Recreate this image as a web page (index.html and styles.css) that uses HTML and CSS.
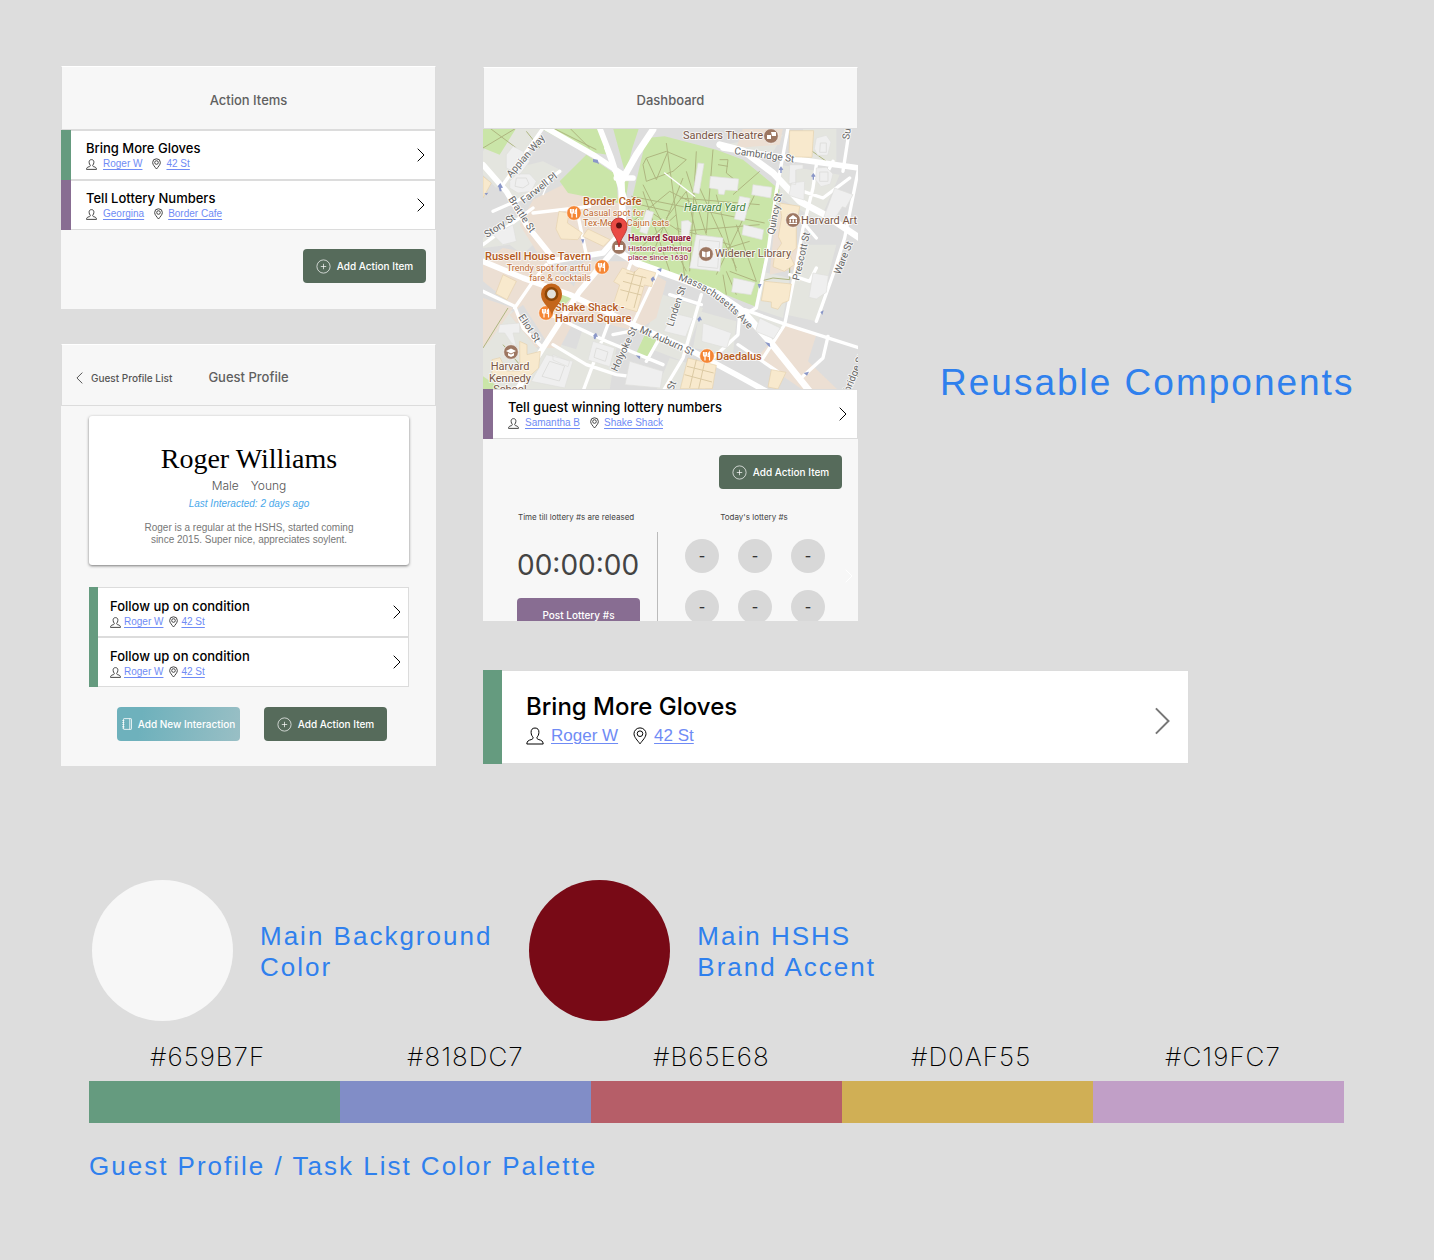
FILE: index.html
```html
<!DOCTYPE html>
<html lang="en">
<head>
<meta charset="utf-8">
<title>Reusable Components</title>
<meta name="viewport" content="width=device-width, initial-scale=1">
<link rel="stylesheet" href="styles.css">
</head>
<body>
<svg class="sprite" aria-hidden="true">
  <symbol id="i-person" viewBox="0 0 18 18"><path d="M9 1C6.300 1 4.900 2.900 5.100 5.400c.1 2.300.8 3.700 1.900 4.700.3 1.500-.4 2.100-1.800 2.500-2.500.7-4.200 1.300-4.400 4.400h16.400c-.2-3.100-1.900-3.700-4.400-4.400-1.400-.4-2.100-1-1.800-2.500 1.100-1 1.800-2.400 1.900-4.700C13.100 2.900 11.700 1 9 1z" fill="none" stroke="currentColor" vector-effect="non-scaling-stroke"/></symbol>
  <symbol id="i-pin" viewBox="0 0 14 18"><path d="M7 16.800C4.500 13.400 1 10.200 1 6.700a6 5.800 0 0 1 12 0c0 3.500-3.500 6.700-6 10.100z" fill="none" stroke="currentColor" vector-effect="non-scaling-stroke"/><circle cx="7" cy="6.700" r="2.800" fill="none" stroke="currentColor" vector-effect="non-scaling-stroke"/></symbol>
  <symbol id="i-next" viewBox="0 0 8 14"><path d="M.7.7 7 7 .7 13.300" fill="none" stroke="currentColor" vector-effect="non-scaling-stroke"/></symbol>
  <symbol id="i-back" viewBox="0 0 8 14"><path d="M7.300.7 1 7l6.300 6.300" fill="none" stroke="currentColor" vector-effect="non-scaling-stroke"/></symbol>
  <symbol id="i-plus" viewBox="0 0 15 15"><g fill="none" stroke="currentColor" stroke-width=".7"><circle cx="7.500" cy="7.500" r="6.600"/><path d="M4.800 7.500h5.400M7.500 4.800v5.400"/></g></symbol>
  <symbol id="i-book" viewBox="0 0 10 12"><g fill="none" stroke="currentColor" stroke-width=".8"><rect x="1.500" y=".6" width="8" height="10.800" rx=".6"/><path d="M7.800.6v10.800M.3 2.500h2M.3 4.500h2M.3 6.500h2M.3 8.500h2M.3 10h2"/></g></symbol>
</svg>

<main>
  <section class="board">
    <div class="column">
      <article class="screen screen--actions">
        <header class="bar"><h2>Action Items</h2></header>
        <ul class="tasks">
          <li class="task task--green">
            <div class="task__body">
              <h3>Bring More Gloves</h3>
              <p class="meta"><svg class="ico"><use href="#i-person"/></svg><a href="#">Roger W</a><svg class="ico ico--pin"><use href="#i-pin"/></svg><a href="#">42 St</a></p>
            </div>
            <svg class="next"><use href="#i-next"/></svg>
          </li>
          <li class="task task--purple">
            <div class="task__body">
              <h3>Tell Lottery Numbers</h3>
              <p class="meta"><svg class="ico"><use href="#i-person"/></svg><a href="#">Georgina</a><svg class="ico ico--pin"><use href="#i-pin"/></svg><a href="#">Border Cafe</a></p>
            </div>
            <svg class="next"><use href="#i-next"/></svg>
          </li>
        </ul>
        <div class="actions"><button class="btn" type="button"><svg class="btn__plus"><use href="#i-plus"/></svg>Add Action Item</button></div>
      </article>

      <article class="screen screen--profile">
        <header class="bar bar--nav">
          <a class="back" href="#"><svg><use href="#i-back"/></svg>Guest Profile List</a>
          <h2>Guest Profile</h2>
        </header>
        <div class="profile">
          <div class="person">
            <h3>Roger Williams</h3>
            <p class="person__facts"><span>Male</span><span>Young</span></p>
            <p class="person__last">Last Interacted: 2 days ago</p>
            <p class="person__note">Roger is a regular at the HSHS, started coming<br>since 2015. Super nice, appreciates soylent.</p>
          </div>
          <ul class="tasks tasks--inset">
            <li class="task task--green">
              <div class="task__body">
                <h3>Follow up on condition</h3>
                <p class="meta"><svg class="ico"><use href="#i-person"/></svg><a href="#">Roger W</a><svg class="ico ico--pin"><use href="#i-pin"/></svg><a href="#">42 St</a></p>
              </div>
              <svg class="next"><use href="#i-next"/></svg>
            </li>
            <li class="task task--green">
              <div class="task__body">
                <h3>Follow up on condition</h3>
                <p class="meta"><svg class="ico"><use href="#i-person"/></svg><a href="#">Roger W</a><svg class="ico ico--pin"><use href="#i-pin"/></svg><a href="#">42 St</a></p>
              </div>
              <svg class="next"><use href="#i-next"/></svg>
            </li>
          </ul>
          <div class="actions actions--pair">
            <button class="btn btn--teal" type="button"><svg class="btn__book"><use href="#i-book"/></svg>Add New Interaction</button>
            <button class="btn" type="button"><svg class="btn__plus"><use href="#i-plus"/></svg>Add Action Item</button>
          </div>
        </div>
      </article>
    </div>

    <div class="column column--wide">
      <div class="showcase">
        <article class="screen screen--dashboard">
          <header class="bar"><h2>Dashboard</h2></header>
          <svg class="map" viewBox="0 1 375 260" role="img" aria-label="Map of Harvard Square">
            <rect width="375" height="262" fill="#dddddd"/>
            <g transform="scale(.33333)">
              <g fill="#e4e5df">
                <path d="M60 0H180L40 180 0 140V70zM60 130l120-30 60 30-60 50-80 40-40-50zM0 330l110-70 70 60-60 60-40-30-80 10zM0 520l90 30-90 130zM80 560l90 110-70 110H0V670zM200 640l100 30-60 116H120zM300 600l100 60-20 126H240zM540 500l120 40-60 160-130-50zM650 550l110 30-10 100-120-20zM560 690l140 40-40 56H520zM780 540l140 60-40 80zM830 430l90 20-20 120-90-30zM940 350h120l-60 230-90-20zM960 0h100v120l-100-20zM890 110l180 30-60 140-120-70zM900 20 860 90 720 50z"/>
              </g>
              <g fill="#ecdfd3">
                <path d="M150 215 250 165 420 205 400 330 330 385 180 400 110 290zM60 360l110 20 140 130-80 150-60 0-70-120L0 460v-60zM300 400l140 0 110 60-30 110-60 40-160-40-40-60zM0 510l90 30L20 640 0 660zM80 560l80 100 30-20-70-110zM915 585l85 35-25 80 90 86H960L820 690zM780 0h120l-10 50-130 10zM880 230l50 10 20 180-90 20z"/>
              </g>
              <g fill="#cae5a8">
                <path d="M490 30 545 25 700 65 780 95 890 185 815 535 740 505 440 400 450 200z"/>
                <path d="M170 0H350L375 80 300 70zM390 0h78l-20 60-20 80zM230 160 310 80l90 60 5 85-150-30zM0 0h100L50 80 0 60zM412 160h25l-8 50zM240 490l30 15-30 30-20-15zM460 675l25-55 35 15-30 60zM0 745l60 41H0z"/>
              </g>
              <g fill="none" stroke="#aeb67f" stroke-width="3">
                <path d="M490 90l60-20 60 25-40 35-80 30-10-50zM490 90l30 65 35-85M445 205l400 80M480 190l80 240M550 45l55 400M640 70l-20 360M690 65l-20 250M480 170l130 260M600 150 500 400M450 280l110-90 60 30M820 190 700 440M760 290l60 170-80-30M700 200l60 230M590 210l240 20M710 95h25l-5 40 25 20M705 110l30 5M750 200l80-70M650 180l110 240M580 300l160 50M500 250l90 60 240-20M450 380l130-120M550 270l60-80 30 130M760 500l-30-70M720 440l10 60M800 340l-100 30M610 130l60 190M470 230l90 20"/>
                <path d="M0 60 100 0M20 0l80 60M130 10l40 50M210 0l130 65M260 0l60 60M0 660 75 540M830 460l40-10 50 5v-70M960 50l70 50M60 650l50 60"/>
              </g>
              <g fill="none" stroke="#fff" stroke-linecap="round" stroke-linejoin="round">
                <path stroke-width="20" d="M395 355 420 300 415 160 460 80 510 5M710 50 780 68 870 135 950 220 1025 260 1130 330M405 370 460 405 600 455 700 495 780 550 860 640 980 790"/>
                <path stroke-width="17" d="M190 0 330 80 420 140M350 0 385 90 425 215M400 150h50M720 60 880 85 1130 120M0 110 70 190 130 290 210 390M0 400 120 450 260 500 440 585 620 665 760 740 850 790M400 330 360 375 200 400M390 370 290 490 180 660 100 790"/>
                <path stroke-width="10" d="M915 0 880 190 855 370 820 540 780 560M1000 110 990 180 960 300 935 440 905 590M1100 0 1080 130M1125 130 1085 330 1050 440 1000 580M785 545 910 590 1130 660M1035 625 1020 690 960 745M905 590 840 690M655 500 600 690 540 790M590 500 560 600M445 400 300 790M520 440 440 610 390 620M0 490 95 535 120 600 180 660M95 540 150 460 190 410M180 550 370 640 540 710M210 650 310 710 400 740 480 750M770 560 765 620 690 690 660 786M765 650 890 735M150 255 320 235M60 170 180 0M30 250 120 210 230 130M0 350 150 240M280 240 310 380M560 500 655 530M940 260l60 70M960 190l60 20 80-60M1050 100l-30 60M920 440l60 20 20-40M490 700l40-70"/>
                <path stroke-width="4" d="M365 60l25 70 20 10M545 135l90 70M180 200l30-70"/>
              </g>
              <g fill="#efefef" stroke="#dfdfdd" stroke-width="2">
                <path d="M70 80l20-25 30 15 20 30-30 40-40-20zM80 160l20-22 40 0 20 22-15 30-40 5-25-15zM30 320l20-30 20 10 20-10 10 50-40 10zM490 245l22 8-20 66-22-8zM645 105l18 2-15 90-18-4zM682 145l85 8-4 35-36-2-4 14-16-2-2-14-26-4zM810 170l57 8-4 32-57-10zM770 205l32 6-18 68-30-6zM782 290l60 15-5 30-60-15zM595 280l20-3 10 8-10 50-20-6zM640 320l80 10-10 100-90-10zM752 450l64 14-12 36-58-8zM920 110l40 0 0 12-22 4 0 44-20-4zM1000 30l30-8 14 20-10 40-30 0-10-20zM1000 120l30-2 20 20-8 30-28 8-16-20zM925 165l40-5-2 56-46-14 4-14zM1055 180l55 20-22 40-10-4-25 40-30-10zM990 435l46 8-6 50-30 20-22-5zM830 570l62 30-20 32-54-22zM660 585l85 30-14 45-75-20zM570 555l60 15-22 56-66-16zM330 640l65 20-15 56-65-20zM190 680l80 20-25 80-100-20zM440 700l100 30-8 50-106-10zM50 590l60-5 0 30-20 0 10 40-15-10-20-30-20 0zM210 680l50 20-5 16-45-20z"/>
              </g>
              <g fill="none" stroke="#dfdfdd" stroke-width="3"><path d="M340 660l35 12-8 28-34-12zM200 700l45 14-16 45-52-14zM1012 45h18v28h-20zM1010 132h25v28h-25zM100 150l30 0 8 18-18 12-24-5zM650 335l60 6-6 80-60-6z"/></g>
              <g fill="#f8e9cd" stroke="#e6d2ae" stroke-width="2">
                <path d="M0 145l25 20-25 45zM228 250l30 5-5 30 45 30-14 20-50-2-15-30zM315 303l66 32-20 20-62-30zM60 440l40 20-28 55-34-18zM418 420l36 14 14-14 50 14-12 42-22-5-22 80-72-20 20-60-18-10zM920 8h72l-5 80-69-2zM890 225l60 10-10 65 0 60-20 20 14 30-30 20-34-14 6-40 20-30-10-20 10-60zM845 460l80 8-8 50-20 8-12 18-20-6 0-16-30-4zM615 690l85 22-12 70h-96zM865 725l44 8-24 50-30-6zM110 640l22 10 0 30 40-10-5 50-50 45-30-25-60 15 0-60 24-6 20 40 40 0z"/>
              </g>
              <path d="M430 435l60 15M420 460l60 16M412 485l62 16M455 430l-25 90M478 445l-25 95M612 715l80 20M605 740l82 22M640 695l-20 85M665 702l-18 80" fill="none" stroke="#dccaa4" stroke-width="3"/>
              <g fill="#8a97c8"><path d="M44 175l8-10 8 14-6 1 2 10-6 0-3-12zM330 93l14 2 4 14-6-4-12-3zM294 334l10 0-4 14zM887 125l7-10 7 10-5 2v8h-4v-8zM984 145l7-10 7 10-5 2v8h-4v-8zM824 468l12 0-7 14zM331 622l8-8 6 12-5 0-3 8-4-1zM846 642l14 4 2 12-6-4zM962 735l16-4-6 12zM503 453l8-8 6 12-6 0-3 6zM522 424l14-4-2 12zM643 573l8-8 6 12-6 0-3 6zM458 682l14 2-2 10zM1012 552l10-5-4 14zM4 196l12-2-6 8z"/></g>
            </g>
            <g class="map__street">
              <text transform="translate(28 50) rotate(-49)">Appian Way</text>
              <text transform="translate(41 76) rotate(-38)">Farwell Pl</text>
              <text transform="translate(4 110) rotate(-33)">Story St</text>
              <text transform="translate(25 71) rotate(57)">Brattle St</text>
              <text transform="translate(35 189) rotate(56)">Eliot St</text>
              <text transform="translate(251 26) rotate(8)">Cambridge St</text>
              <text transform="translate(291 107) rotate(-79)">Quincy St</text>
              <text transform="translate(316 153) rotate(-77)">Prescott St</text>
              <text transform="translate(357 147) rotate(-68)">Ware St</text>
              <text transform="translate(190 199) rotate(-72)">Linden St</text>
              <text transform="translate(134 244) rotate(-65)">Holyoke St</text>
              <text transform="translate(156 204) rotate(24)">Mt Auburn St</text>
              <text transform="translate(359 284) rotate(-68)">Cambridge St</text>
              <text transform="translate(366 12) rotate(-80)">Sumner Rd</text>
              <text transform="translate(190 263) rotate(-68)">St</text>
              <path id="mass" d="M195 152Q232 163 264 200" fill="none" stroke="none"/>
              <text><textPath href="#mass">Massachusetts Ave</textPath></text>
            </g>
            <g class="map__place map__place--brown">
              <text x="200" y="11">Sanders Theatre</text>
              <text x="318" y="96">Harvard Art</text>
              <text x="232" y="129">Widener Library</text>
              <text x="27" y="242" text-anchor="middle">Harvard</text>
              <text x="27" y="254" text-anchor="middle">Kennedy</text>
              <text x="27" y="265" text-anchor="middle">School</text>
            </g>
            <text class="map__yard" x="201" y="83">Harvard Yard</text>
            <g class="map__place map__place--food">
              <text x="100" y="77">Border Cafe</text>
              <text x="108" y="132" text-anchor="end">Russell House Tavern</text>
              <text x="72" y="183">Shake Shack -</text>
              <text x="72" y="194">Harvard Square</text>
              <text x="233" y="232">Daedalus</text>
            </g>
            <g class="map__note map__note--food">
              <text x="100" y="88">Casual spot for</text>
              <text x="100" y="98">Tex-Mex &amp; Cajun eats</text>
              <text x="108" y="143" text-anchor="end">Trendy spot for artful</text>
              <text x="108" y="153" text-anchor="end">fare &amp; cocktails</text>
            </g>
            <g class="map__note map__note--red">
              <text class="map__strong" x="145" y="113">Harvard Square</text>
              <text x="145" y="123">Historic gathering</text>
              <text x="145" y="132">place since 1630</text>
            </g>
            <g stroke="#fff" stroke-width=".6">
              <g fill="#f58634"><circle cx="91" cy="85" r="7.300"/><circle cx="119" cy="139" r="7.300"/><circle cx="63" cy="185" r="7.300"/><circle cx="224" cy="228" r="7.300"/></g>
              <g fill="#9d7762"><circle cx="288" cy="8" r="7.300"/><circle cx="310" cy="92" r="7.300"/><circle cx="223" cy="126" r="7.300"/><circle cx="28" cy="224" r="7.300"/><circle cx="136" cy="119" r="7.300"/></g>
            </g>
            <g fill="none" stroke="#fff" stroke-width="1.200">
              <path id="fork" d="M87.500 81v3q0 1.500 1.500 1.500V89.500M90.500 81v3q0 1.500-1.500 1.500M89 81v4M93.500 89.500V81q-1.500 1-1.500 4.500h1.500"/>
              <use href="#fork" x="28" y="54"/><use href="#fork" x="-28" y="100"/><use href="#fork" x="133" y="143"/>
            </g>
            <g fill="#fff"><path d="M284 7h4v4h-4zM288 4h5v4h-4zM306 90l4-3 4 3v1h-8zM306.500 91.500h1.500v3h-1.500zM309.500 91.500h1.500v3h-1.500zM312.500 91.500h1.500v3h-1.500zM306 95h8v1h-8zM219 123l3.500 1v5.500l-3.500-1zM227 123l-3.500 1v5.500l3.500-1zM23 223l5-2.500 5 2.500-5 2.500zM25 225l3 1.500 3-1.500v2.500l-3 1.500-3-1.500zM132 117h8v5h-8z"/></g>
            <path d="M136 119c-1-9-8-13-8-21a8 8 0 0 1 16 0c0 8-7 12-8 21z" fill="#ea4a44" stroke="#b5302c" stroke-width=".8"/>
            <circle cx="136" cy="97.500" r="2.900" fill="#5c1010"/>
            <path d="M69 188c-1-9-11-12-11-22a10.500 10.500 0 0 1 21 0c0 10-9 13-10 22z" fill="#c4661c"/>
            <circle cx="68.500" cy="166" r="5.700" fill="#e2e2dc" stroke="#8c4708" stroke-width="2.500"/>
          </svg>
          <ul class="tasks">
            <li class="task task--purple">
              <div class="task__body">
                <h3>Tell guest winning lottery numbers</h3>
                <p class="meta"><svg class="ico"><use href="#i-person"/></svg><a href="#">Samantha B</a><svg class="ico ico--pin"><use href="#i-pin"/></svg><a href="#">Shake Shack</a></p>
              </div>
              <svg class="next"><use href="#i-next"/></svg>
            </li>
          </ul>
          <div class="actions actions--dash"><button class="btn" type="button"><svg class="btn__plus"><use href="#i-plus"/></svg>Add Action Item</button></div>
          <div class="lottery">
            <p class="lottery__label">Time till lottery #s are released</p>
            <p class="lottery__label lottery__label--today">Today's lottery #s</p>
            <div class="lottery__timer">
              <time>00:00:00</time>
              <button class="btn btn--purple" type="button">Post Lottery #s</button>
            </div>
            <div class="lottery__draw">
              <ul class="balls"><li>-</li><li>-</li><li>-</li><li>-</li><li>-</li><li>-</li></ul>
              <svg class="next next--white"><use href="#i-next"/></svg>
            </div>
          </div>
        </article>
        <h1>Reusable Components</h1>
      </div>

      <article class="task task--green task--large">
        <div class="task__body">
          <h3>Bring More Gloves</h3>
          <p class="meta"><svg class="ico"><use href="#i-person"/></svg><a href="#">Roger W</a><svg class="ico ico--pin"><use href="#i-pin"/></svg><a href="#">42 St</a></p>
        </div>
        <svg class="next"><use href="#i-next"/></svg>
      </article>
    </div>
  </section>

  <section class="colors">
    <div class="mains">
      <div class="main"><span class="dot"></span><p>Main Background<br>Color</p></div>
      <div class="main"><span class="dot dot--accent"></span><p>Main HSHS<br>Brand Accent</p></div>
    </div>
    <ul class="codes"><li>#659B7F</li><li>#818DC7</li><li>#B65E68</li><li>#D0AF55</li><li>#C19FC7</li></ul>
    <div class="swatches"><span class="s-green"></span><span class="s-blue"></span><span class="s-red"></span><span class="s-gold"></span><span class="s-lilac"></span></div>
    <h2>Guest Profile / Task List Color Palette</h2>
  </section>
</main>
</body>
</html>
```
FILE: styles.css
```css
:root {
  --sans: "Liberation Sans", Arial, sans-serif;
  --medium: Inter, "Liberation Sans", sans-serif;
  --paper: #f7f7f7;
  --line: #dcdcdc;
  --blue: #2f80ed;
}

* { box-sizing: border-box; }

body {
  margin: 0;
  background: #dddddd;
  color: #000;
  font-family: var(--sans);
}

h1, h2, h3, p, ul { margin: 0; padding: 0; font-weight: 400; }
ul { list-style: none; }
svg { display: block; flex: none; }
.sprite { position: absolute; width: 0; height: 0; }

/* Board of screens */
.board {
  display: grid;
  grid-template-columns: minmax(0, 375px) minmax(0, 1fr);
  gap: 47px;
  padding: 66px 61px 0;
}
.column { display: flex; flex-direction: column; gap: 35px; }
.column--wide { gap: 49px; }
.screen { background: var(--paper); }
.screen--actions { padding-bottom: 26px; }
.screen--dashboard { width: 375px; height: 554px; overflow: hidden; }
.showcase { display: flex; align-items: flex-start; gap: 82px; padding-top: 1px; }

h1 {
  padding-top: 294px;
  color: var(--blue);
  font-size: 37px;
  line-height: 44px;
  letter-spacing: 2px;
  white-space: nowrap;
}

.bar {
  display: grid;
  grid-template-columns: 1fr auto 1fr;
  align-items: center;
  height: 62px;
  padding-top: 4px;
  border: 1px solid var(--line);
  border-top-color: #fff;
}
.bar h2 {
  grid-column: 2;
  color: #606060;
  font: 500 13px/18px var(--medium);
}
.screen--actions .bar { height: 64px; }
.back {
  display: flex;
  align-items: center;
  gap: 8px;
  padding: 2px 0 0 14px;
  color: #555;
  font: 500 10px/14px var(--medium);
  text-decoration: none;
  white-space: nowrap;
}
.back svg { width: 7px; height: 12px; }

/* Task rows */
.task {
  --stripe: 10px;
  display: flex;
  align-items: center;
  height: 50px;
  padding-right: 11px;
  background: #fff;
  box-shadow: inset 0 0 0 1px var(--line);
}
.task::before {
  content: "";
  align-self: stretch;
  width: var(--stripe);
  background: #659b7f;
}
.task--purple::before { background: #886d92; }
.task__body { flex: 1; padding-left: 15px; }
.task h3 { font: 500 13px/18px var(--medium); }
.meta {
  display: flex;
  align-items: center;
  font-size: 10px;
  line-height: 14px;
}
.meta a {
  color: #6f8bf5;
  text-decoration: underline;
  text-underline-offset: 2px;
  text-decoration-thickness: 1px;
}
.ico { width: 11px; height: 11px; margin-right: 6px; color: #444; }
.ico--pin { width: 9px; height: 12px; margin-right: 5px; margin-left: 10px; }
.next { width: 8px; height: 14px; }

.tasks--inset .task { --stripe: 9px; padding-right: 8px; }
.tasks--inset .task__body { padding: 2px 0 0 12px; }
.tasks--inset .ico { margin-right: 3px; }
.tasks--inset .ico--pin { margin-left: 6px; }

.task--large {
  --stripe: 19px;
  max-width: 706px;
  height: 94px;
  padding-right: 18px;
}
.task--large::before { margin-right: 24px; }
.task--large .task__body { padding: 8px 0 0; }
.task--large h3 { font-size: 24px; line-height: 30px; }
.task--large .meta { font-size: 17px; line-height: 28px; }
.task--large .ico { width: 18px; height: 18px; margin-right: 7px; color: #000; }
.task--large .ico--pin { width: 14px; margin-left: 15px; }
.task--large .next { width: 17px; height: 28px; margin-top: 8px; color: #777; stroke-width: 2px; }

/* Buttons */
.actions { display: flex; justify-content: flex-end; padding: 19px 10px 0; }
.actions--pair { justify-content: center; gap: 24px; padding: 20px 0 25px 6px; }
.actions--dash { padding: 16px 16px 0; }
.btn {
  display: flex;
  align-items: center;
  justify-content: center;
  gap: 6px;
  width: 123px;
  height: 34px;
  padding: 0;
  border: 0;
  border-radius: 4px;
  background: #566b5b;
  color: #fff;
  font: 500 10px/14px var(--medium);
  white-space: nowrap;
}
.btn--teal { background: linear-gradient(100deg, #6eb1bc 20%, #99bfc5); }
.btn--purple { background: #886d92; }
.btn__plus { width: 15px; height: 15px; }
.btn__book { width: 10px; height: 12px; }

/* Guest profile */
.profile { padding: 10px 27px 0 28px; }
.person {
  height: 149px;
  margin-bottom: 22px;
  padding-top: 25px;
  border-radius: 3px;
  background: #fff;
  box-shadow: 0 1px 3px #777;
  text-align: center;
}
.person h3 { font: 28px/36px "Liberation Serif", serif; }
.person__facts {
  display: flex;
  justify-content: center;
  gap: 12px;
  color: #555;
  font: 300 12px/18px var(--medium);
}
.person__last {
  color: #4aa8ea;
  font-size: 10px;
  font-style: italic;
  line-height: 18px;
}
.person__note {
  padding-top: 9px;
  color: #777;
  font-size: 10px;
  line-height: 12px;
}

/* Map */
.map { width: 100%; height: auto; font-family: Roboto, sans-serif; }
.map text { paint-order: stroke; stroke: #ffffffb0; stroke-width: 2px; stroke-linejoin: round; }
.map__street { fill: #666; font-size: 10px; }
.map__place { font-size: 11px; font-weight: 500; }
.map__place--brown { fill: #795646; font-weight: 400; }
.map__place--food { fill: #b55a1c; }
.map__note { font-size: 9px; }
.map__note--food { fill: #c06a30; }
.map__note--red { fill: #8e1038; font-size: 8px; }
.map__strong { font-size: 9px; font-weight: 700; }
.map__yard { fill: #43803c; font-size: 11px; font-style: italic; }

/* Lottery */
.lottery {
  display: grid;
  grid-template-columns: 175px 1fr;
  padding-top: 21px;
}
.lottery__label {
  padding: 0 0 8px 35px;
  color: #444;
  font: 8px/14px var(--medium);
}
.lottery__label--today { width: 164px; padding-left: 28px; text-align: center; }
.lottery__timer {
  display: flex;
  flex-direction: column;
  gap: 15px;
  padding: 15px 0 30px 34px;
  border-right: 1px solid #bbb;
}
.lottery__timer time { color: #444; font: 400 28px/36px var(--medium); }
.lottery__draw {
  display: flex;
  align-items: flex-start;
  gap: 20px;
  padding: 7px 0 0 27px;
}
.balls { display: grid; grid-template-columns: repeat(3, 34px); gap: 17px 19px; }
.balls li {
  height: 34px;
  border-radius: 50%;
  background: #d8d8d8;
  color: #333;
  font: 500 14px/34px var(--medium);
  text-align: center;
}
.next--white { margin-top: 30px; color: #fff; }

/* Colours */
.colors { padding: 114px 90px 78px 89px; }
.mains { display: flex; gap: 37px; padding-left: 3px; }
.main { display: flex; align-items: center; gap: 27px; }
.main p { padding-top: 3px; }
.dot { width: 141px; height: 141px; border-radius: 50%; background: var(--paper); }
.dot--accent { background: #780a16; }
.main p, .colors h2 {
  color: var(--blue);
  font-size: 26px;
  line-height: 31px;
  letter-spacing: 2px;
}
.codes {
  display: grid;
  grid-template-columns: 257fr 246fr 258fr 254fr 179fr;
  padding: 20px 0 8px 61px;
  font: 200 26px/32px var(--medium);
  letter-spacing: 1px;
}
.swatches { display: grid; grid-template-columns: repeat(5, 1fr); height: 42px; }
.s-green { background: #659b7f; }
.s-blue { background: #818dc7; }
.s-red { background: #b65e68; }
.s-gold { background: #d0af55; }
.s-lilac { background: #c19fc7; }
.colors h2 { padding-top: 28px; }
```
